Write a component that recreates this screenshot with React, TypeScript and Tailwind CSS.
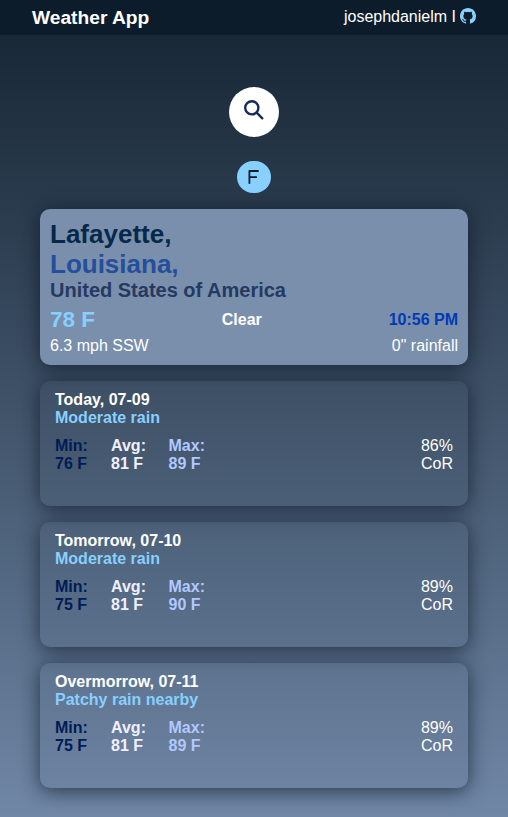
import React from "react";

type Day = { label: string; condition: string; min: string; avg: string; max: string; rain: string };

const days: Day[] = [
  { label: "Today, 07-09", condition: "Moderate rain", min: "76 F", avg: "81 F", max: "89 F", rain: "86%" },
  { label: "Tomorrow, 07-10", condition: "Moderate rain", min: "75 F", avg: "81 F", max: "90 F", rain: "89%" },
  { label: "Overmorrow, 07-11", condition: "Patchy rain nearby", min: "75 F", avg: "81 F", max: "89 F", rain: "89%" },
];

function GithubIcon() {
  return (
    <svg viewBox="0 0 16 16" className="mb-px size-4" fill="#87d0ff">
      <path d="M8 0C3.58 0 0 3.58 0 8c0 3.54 2.29 6.53 5.47 7.59.4.07.55-.17.55-.38 0-.19-.01-.82-.01-1.49-2.01.37-2.53-.49-2.69-.94-.09-.23-.48-.94-.82-1.13-.28-.15-.68-.52-.01-.53.63-.01 1.08.58 1.23.82.72 1.21 1.87.87 2.33.66.07-.52.28-.87.51-1.07-1.3-.15-3.15-.75-3.15-3.6 0-.87.31-1.59.82-2.15-.08-.2-.36-1.02.08-2.12 0 0 .67-.21 1.7.6.64-.18 1.32-.27 2-.27s1.36.09 2 .27c1.03-.82 1.7-.6 1.7-.6.44 1.1.16 1.92.08 2.12.51.56.82 1.27.82 2.15 0 2.86-1.86 3.4-3.15 3.6.29.25.54.73.54 1.48 0 1.07-.01 1.93-.01 2.2 0 .21.15.46.55.38A8.01 8.01 0 0 0 16 8c0-4.42-3.58-8-8-8Z" />
    </svg>
  );
}

function SearchIcon() {
  return (
    <svg viewBox="0 0 20 20" className="mb-[5px] size-5" fill="none" stroke="#172b5b" strokeWidth="2.4" strokeLinecap="round">
      <circle cx="7.8" cy="7.8" r="6.6" />
      <path d="M12.7 12.7 18.3 18.3" />
    </svg>
  );
}

function DayCard({ day }: { day: Day }) {
  return (
    <section className="h-[125px] rounded-[10px] px-[15px] pt-2.5 shadow-[0_3px_20px_rgba(4,16,30,0.65)]">
      <h3 className="font-bold">{day.label}</h3>
      <p className="font-bold text-[#87d0ff]">{day.condition}</p>
      <div className="mt-2.5 flex font-bold">
        <div className="w-14 text-[#001c55]">Min:<br />{day.min}</div>
        <div className="w-[57.5px] text-[#f0f0ff]">Avg:<br />{day.avg}</div>
        <div className="text-[#b0c8ff]">Max:<br />{day.max}</div>
        <div className="ml-auto text-right font-normal">{day.rain}<br />CoR</div>
      </div>
    </section>
  );
}

export default function App() {
  return (
    <div className="h-[817px] bg-linear-to-b from-[#152432] to-[#7087a6] font-['Liberation_Sans',Arial,sans-serif] text-base leading-[18px] text-white">
      <header className="flex h-[35px] items-center justify-between bg-[#0c1c2a] px-8">
        <h1 className="text-[19.2px] font-bold">Weather App</h1>
        <div className="flex h-[33px] items-center gap-1 self-start">
          <span>josephdanielm I</span>
          <GithubIcon />
        </div>
      </header>
      <main className="flex flex-col px-10 pt-[52px]">
        <button className="flex size-[50px] items-center justify-center self-center rounded-full bg-white"><SearchIcon /></button>
        <button className="mt-6 flex h-8 w-[34px] items-center justify-center self-center rounded-full bg-[#87d0ff]">
          <svg viewBox="0 0 11 14" className="mr-px h-3.5 w-[11px]" fill="none" stroke="#091a27" strokeWidth="1.8" strokeLinecap="round" strokeLinejoin="round">
            <path d="M10 1H1.4v12M1.4 7.2h6.8" />
          </svg>
        </button>
        <section className="mt-4 h-[156px] rounded-[10px] bg-[#798fac] px-2.5 pt-2.5 shadow-[0_3px_20px_rgba(4,16,30,0.65)]">
          <h2 className="text-[26px] leading-[30px] font-bold text-[#06284a]">Lafayette,</h2>
          <h2 className="text-[26px] leading-[30px] font-bold text-[#254e9b]">Louisiana,</h2>
          <h3 className="text-xl leading-[23px] font-bold text-[#263963]">United States of America</h3>
          <div className="mt-1 flex h-[27px] items-center justify-between font-bold">
            <span className="text-[22.5px] text-[#87d0ff]">78 F</span>
            <span>Clear</span>
            <span className="text-[#003bb5]">10:56 PM</span>
          </div>
          <div className="mt-1 flex justify-between"><span>6.3 mph SSW</span><span>0" rainfall</span></div>
        </section>
        <div className="mt-4 flex flex-col gap-4">
          {days.map((day) => <DayCard key={day.label} day={day} />)}
        </div>
      </main>
    </div>
  );
}
